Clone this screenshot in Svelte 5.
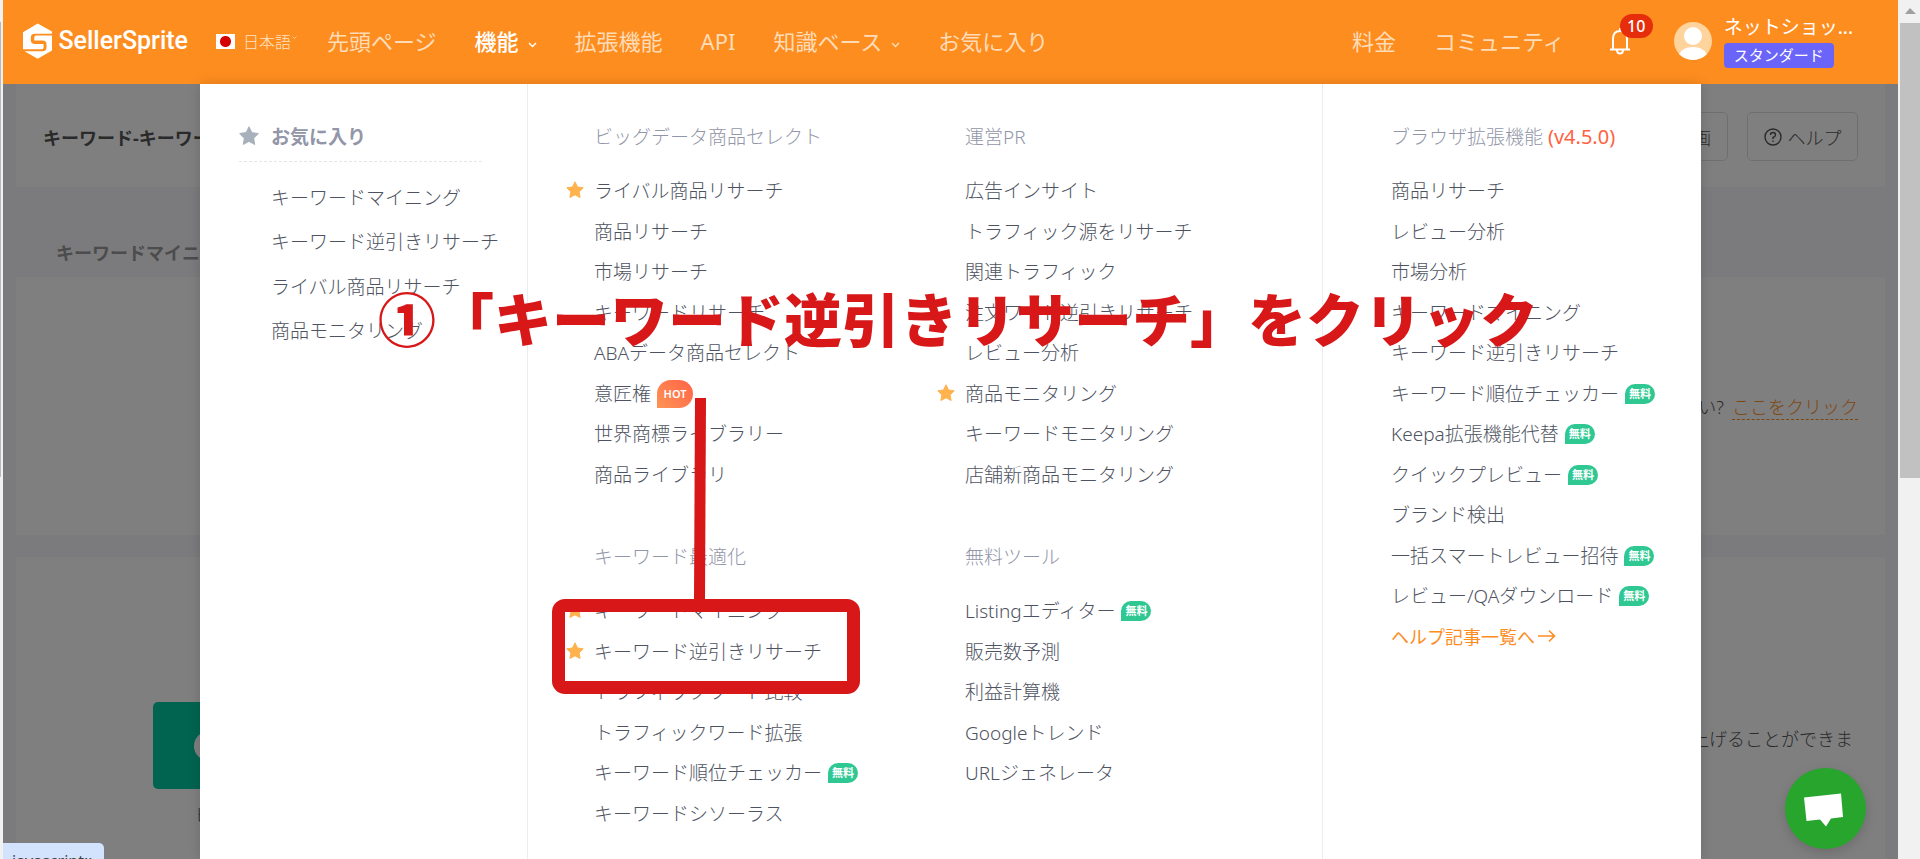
<script lang="ts">
	type Item = { label: string; star?: boolean; free?: boolean; hot?: boolean };
	type Group = { title: string; items: Item[] };

	const favorites = [
		'キーワードマイニング',
		'キーワード逆引きリサーチ',
		'ライバル商品リサーチ',
		'商品モニタリング'
	];

	const groups: Group[] = [
		{
			title: 'ビッグデータ商品セレクト',
			items: [
				{ label: 'ライバル商品リサーチ', star: true },
				{ label: '商品リサーチ' },
				{ label: '市場リサーチ' },
				{ label: 'キーワードリサーチ' },
				{ label: 'ABAデータ商品セレクト' },
				{ label: '意匠権', hot: true },
				{ label: '世界商標ライブラリー' },
				{ label: '商品ライブラリ' }
			]
		},
		{
			title: '運営PR',
			items: [
				{ label: '広告インサイト' },
				{ label: 'トラフィック源をリサーチ' },
				{ label: '関連トラフィック' },
				{ label: '注文ワード逆引きリサーチ' },
				{ label: 'レビュー分析' },
				{ label: '商品モニタリング', star: true },
				{ label: 'キーワードモニタリング' },
				{ label: '店舗新商品モニタリング' }
			]
		},
		{
			title: 'キーワード最適化',
			items: [
				{ label: 'キーワードマイニング', star: true },
				{ label: 'キーワード逆引きリサーチ', star: true },
				{ label: 'トラフィックワード比較' },
				{ label: 'トラフィックワード拡張' },
				{ label: 'キーワード順位チェッカー', free: true },
				{ label: 'キーワードシソーラス' }
			]
		},
		{
			title: '無料ツール',
			items: [
				{ label: 'Listingエディター', free: true },
				{ label: '販売数予測' },
				{ label: '利益計算機' },
				{ label: 'Googleトレンド' },
				{ label: 'URLジェネレータ' }
			]
		}
	];

	const extension: Item[] = [
		{ label: '商品リサーチ' },
		{ label: 'レビュー分析' },
		{ label: '市場分析' },
		{ label: 'キーワードマイニング' },
		{ label: 'キーワード逆引きリサーチ' },
		{ label: 'キーワード順位チェッカー', free: true },
		{ label: 'Keepa拡張機能代替', free: true },
		{ label: 'クイックプレビュー', free: true },
		{ label: 'ブランド検出' },
		{ label: '一括スマートレビュー招待', free: true },
		{ label: 'レビュー/QAダウンロード', free: true }
	];

	const nav = [
		{ label: '先頭ページ' },
		{ label: '機能', active: true, caret: true },
		{ label: '拡張機能' },
		{ label: 'API' },
		{ label: '知識ベース', caret: true },
		{ label: 'お気に入り' }
	];
</script>

{#snippet star()}
	<svg class="star" viewBox="0 0 18 18" aria-hidden="true">
		<path d="M9 .8l2.5 5.2 5.7.8-4.1 4 1 5.7L9 13.8l-5.100 2.700 1-5.700-4.100-4 5.700-.8z" fill="currentColor" stroke="currentColor" stroke-linejoin="round" />
	</svg>
{/snippet}

{#snippet caret()}
	<svg class="caret" viewBox="0 0 9 6" aria-hidden="true">
		<path d="M1 1l3.500 3.600L8 1" fill="none" stroke="currentColor" stroke-width="1.400" />
	</svg>
{/snippet}

{#snippet row(item: Item)}
	<li>
		<span class="slot">{#if item.star}{@render star()}{/if}</span>
		<a href="#top">{item.label}</a>
		{#if item.free}<span class="free">無料</span>{/if}
		{#if item.hot}<span class="hot">HOT</span>{/if}
	</li>
{/snippet}

<div class="window">
	<div class="edge"><div class="edge-bar"></div></div>

	<div class="page">
		<header>
			<a class="logo" href="#top">
				<svg viewBox="0 0 30 36" width="30" height="36" aria-hidden="true">
					<path d="M15 0L30 8.500v2H12q-4 0-4 4v2.500q0 4 4 4h9v4q0 1.500-1.500 1.500H0V9z" fill="#fff" />
					<path d="M30 12.500V27.500L15 36 1.500 28.500H20q4 0 4-4v-3q0-4-4-4h-8.500v-3q0-2 2-2z" fill="#fff" />
				</svg>
				SellerSprite
			</a>
			<button class="lang"><span class="flag"></span>日本語{@render caret()}</button>
			<nav>
				{#each nav as entry}
					<a href="#top" class:active={entry.active}>
						{entry.label}{#if entry.caret}{@render caret()}{/if}
					</a>
				{/each}
			</nav>
			<nav class="right">
				<a href="#top">料金</a>
				<a href="#top">コミュニティ</a>
			</nav>
			<button class="bell" aria-label="通知">
				<svg viewBox="0 0 22 28" width="22" height="28" fill="none" stroke="#fff" stroke-width="2" aria-hidden="true">
					<path d="M11 1v3M4 22V12q0-8 7-8t7 8v10M1 22.500h20M8 23q0 3.500 3 3.500t3-3.500" />
				</svg>
				<span class="count">10</span>
			</button>
			<svg class="avatar" viewBox="0 0 38 38" width="38" height="38" aria-hidden="true">
				<clipPath id="face"><circle cx="19" cy="19" r="19" /></clipPath>
				<g clip-path="url(#face)">
					<rect width="38" height="38" fill="#ffd49c" />
					<circle cx="19" cy="14" r="9" fill="#fff" />
					<ellipse cx="19" cy="36" rx="15" ry="11" fill="#fff" />
				</g>
			</svg>
			<div class="user">
				<span class="name">ネットショッ...</span>
				<span class="plan">スタンダード</span>
			</div>
		</header>

		<main>
			<section class="card title-card">
				<h1>キーワード-キーワードマイニング</h1>
				<button>動画</button>
				<button>
					<svg viewBox="0 0 18 18" width="18" height="18" fill="none" stroke="currentColor" stroke-width="1.400" aria-hidden="true">
						<circle cx="9" cy="9" r="8" />
						<path d="M6.500 7q0-2.500 2.500-2.500T11.500 7Q11.500 8.500 9 9.500v1.500M9 12.500v1.500" />
					</svg>
					ヘルプ
				</button>
			</section>
			<h2>キーワードマイニング</h2>
			<section class="card search-card">
				<span>い?</span><a href="#top">ここをクリック</a>
			</section>
			<section class="card guide-card">
				<figure>
					<div class="tile"><span></span></div>
					<figcaption>ビデオ</figcaption>
				</figure>
				<p>上げることができま</p>
			</section>
			<div class="dim"></div>
		</main>

		<div class="menu">
			<section class="favorites">
				<h3>{@render star()}お気に入り</h3>
				<ul>
					{#each favorites as label}
						<li><a href="#top">{label}</a></li>
					{/each}
				</ul>
			</section>
			<div class="groups">
				{#each groups as group}
					<section>
						<h4>{group.title}</h4>
						<ul>
							{#each group.items as item}{@render row(item)}{/each}
						</ul>
					</section>
				{/each}
			</div>
			<section class="extension">
				<h4>ブラウザ拡張機能 <em>(v4.5.0)</em></h4>
				<ul>
					{#each extension as item}{@render row(item)}{/each}
					<li class="more">
						<span class="slot"></span>
						<a href="#top">
							ヘルプ記事一覧へ
							<svg viewBox="0 0 18 14" width="18" height="14" fill="none" stroke="currentColor" stroke-width="1.600" aria-hidden="true">
								<path d="M0 7h16M11 1.500L16.500 7 11 12.500" />
							</svg>
						</a>
					</li>
				</ul>
			</section>
		</div>

		<button class="chat" aria-label="チャット">
			<svg viewBox="0 0 81 81" width="81" height="81" aria-hidden="true">
				<path d="M19 29.500L56 25.500 58 49 46 50.500 41 58.500 35 51.500 21.500 53z" fill="#fff" />
			</svg>
		</button>
		<div class="status">javascript:;</div>
	</div>

	<div class="scrollbar">
		<svg viewBox="0 0 20 23" width="20" height="23" aria-hidden="true"><path d="M5 14l5-6 6 6z" fill="#a0a0a0" /></svg>
		<div class="thumb"></div>
	</div>

	<p class="callout">①「キーワード逆引きリサーチ」をクリック</p>
	<svg class="pointer" viewBox="0 0 13 204" width="13" height="204" aria-hidden="true"><path d="M2 0h11l-1 204H1z" fill="#d71718" /></svg>
	<div class="frame"></div>
</div>

<style>
	:global(body) {
		margin: 0;
		overflow: hidden;
	}
	.window {
		position: relative;
		display: grid;
		grid-template-columns: 3px 1fr 22px;
		height: 100vh;
		overflow: hidden;
		background: #f1f1f1;
		font-family: 'Noto Sans', 'Noto Sans CJK JP', sans-serif;
		font-size: 19px;
		color: #4e5361;
	}
	a {
		color: inherit;
		text-decoration: none;
	}
	button {
		font: inherit;
		color: inherit;
		background: none;
		border: none;
		padding: 0;
		cursor: pointer;
	}
	h1, h2, h3, h4, p, ul, figure {
		margin: 0;
		padding: 0;
	}
	ul {
		list-style: none;
	}
	.edge {
		padding-top: 22px;
	}
	.edge-bar {
		width: 1px;
		height: 53vh;
		background: #b8b8b8;
	}
	.page {
		position: relative;
		display: flex;
		flex-direction: column;
		min-width: 0;
		height: 100vh;
		overflow: hidden;
	}

	header {
		display: flex;
		align-items: center;
		height: 84px;
		flex: none;
		box-sizing: border-box;
		padding: 0 45px 2px 20px;
		background: #fd8d1f;
		color: #fff;
		white-space: nowrap;
	}
	.logo {
		display: flex;
		align-items: center;
		gap: 6px;
		width: 165px;
		font: 500 25px/36px Roboto, sans-serif;
	}
	.lang {
		display: flex;
		align-items: center;
		margin: 0 30px 0 28px;
		font-size: 16px;
		font-weight: 300;
		color: #ffe3c6;
	}
	.lang .caret {
		width: 5px;
		margin: 0 0 6px 1px;
	}
	.flag {
		width: 19px;
		height: 15px;
		margin-right: 8px;
		background: radial-gradient(circle, #d40000 5px, #fff 6px);
	}
	nav {
		display: flex;
		gap: 38px;
		font-size: 22px;
		line-height: 32px;
		color: #ffdcb8;
	}
	nav .active {
		color: #fff;
		font-weight: 500;
	}
	.caret {
		width: 9px;
		margin-left: 9px;
	}
	nav .caret {
		margin-bottom: 2px;
	}
	.right {
		margin-left: auto;
	}
	.bell {
		position: relative;
		display: flex;
		margin: 0 43px 0 44px;
	}
	.count {
		position: absolute;
		left: 11px;
		top: -13px;
		width: 33px;
		border-radius: 12px;
		background: #e62e0d;
		font-size: 16px;
		line-height: 24px;
		font-weight: 500;
	}
	.user {
		display: flex;
		flex-direction: column;
		align-items: flex-start;
		gap: 4px;
		margin-left: 12px;
	}
	.name {
		font-size: 19px;
		line-height: 24px;
	}
	.plan {
		width: 110px;
		border-radius: 4px;
		background: #6a64f8;
		font-size: 15px;
		line-height: 25px;
		text-align: center;
	}

	main {
		position: relative;
		flex: 1;
		display: flex;
		flex-direction: column;
		min-height: 0;
		padding: 0 13px;
		background: #f6f6fa;
		color: #555;
		font-size: 18px;
		font-weight: 300;
	}
	.card {
		background: #fff;
		box-sizing: border-box;
	}
	.title-card {
		display: flex;
		align-items: center;
		gap: 19px;
		height: 103px;
		flex: none;
		padding: 2px 27px 0;
	}
	h1 {
		flex: 1;
		font-size: 18px;
		font-weight: 700;
	}
	.title-card button {
		display: flex;
		align-items: center;
		justify-content: center;
		gap: 6px;
		width: 111px;
		height: 49px;
		border: 1px solid #dcdfe6;
		border-radius: 5px;
	}
	.title-card button:nth-of-type(1) {
		width: 70px;
	}
	h2 {
		padding: 42px 40px 0;
		font-size: 18px;
		line-height: 48px;
		font-weight: 700;
		color: #999;
	}
	.search-card {
		display: flex;
		align-items: center;
		justify-content: flex-end;
		gap: 8px;
		height: 258px;
		flex: none;
		padding-right: 27px;
	}
	.search-card a {
		color: #fd8d1f;
		border-bottom: 1px dashed #fd8d1f;
	}
	.guide-card {
		flex: 1;
		display: flex;
		justify-content: space-between;
		align-items: flex-start;
		margin-top: 22px;
		padding: 145px 32px 0 137px;
	}
	.tile {
		display: flex;
		align-items: center;
		justify-content: center;
		width: 112px;
		height: 87px;
		border-radius: 5px;
		background: #00c8a0;
	}
	.tile span {
		width: 30px;
		height: 30px;
		border-radius: 50%;
		background: #fff;
	}
	figcaption {
		margin-top: 12px;
		padding-left: 42px;
	}
	.guide-card p {
		padding-top: 23px;
	}
	.dim {
		position: absolute;
		inset: 0;
		background: rgba(0, 0, 0, 0.5);
	}

	.menu {
		position: absolute;
		top: 84px;
		bottom: 0;
		left: 197px;
		right: 197px;
		display: grid;
		grid-template-columns: 328px 1fr 378px;
		background: #fff;
		box-shadow: 0 0 12px rgba(0, 0, 0, 0.15);
		font-weight: 300;
		white-space: nowrap;
	}
	.favorites, .groups {
		border-right: 1px solid #ececf0;
	}
	.favorites {
		padding: 31px 45px 0 39px;
	}
	.star {
		width: 18px;
		height: 18px;
		color: #ffb24d;
	}
	h3 {
		display: flex;
		align-items: center;
		gap: 12px;
		padding-bottom: 4px;
		height: 42px;
		border-bottom: 1px dashed #e4e6ea;
		font-size: 19px;
		font-weight: 700;
		color: #9296a8;
	}
	h3 .star {
		width: 20px;
		height: 20px;
		color: #a7b0bb;
	}
	.favorites ul {
		padding: 14px 0 0 32px;
	}
	.favorites li {
		line-height: 44px;
	}
	.favorites li:nth-child(even) {
		line-height: 45px;
	}
	.groups {
		display: grid;
		grid-template-columns: 371px 1fr;
		align-content: start;
		row-gap: 49px;
		padding: 39px 0 0 38px;
	}
	.extension {
		padding: 39px 0 0 40px;
	}
	h4 {
		padding-left: 28px;
		margin-bottom: 19px;
		font-size: 19px;
		line-height: 28px;
		font-weight: 300;
		color: #9296a8;
	}
	em {
		font-size: 20px;
		font-style: normal;
		font-weight: 400;
		color: #ff6242;
	}
	.menu li {
		display: flex;
		align-items: center;
	}
	.groups li, .extension li {
		height: 40px;
	}
	.groups li:nth-child(even), .extension li:nth-child(even) {
		height: 41px;
	}
	.slot {
		display: flex;
		width: 28px;
	}
	.free, .hot {
		margin-left: 6px;
		color: #fff;
		text-align: center;
	}
	.free {
		width: 30px;
		margin-top: 2px;
		border-radius: 10px 10px 10px 0;
		background: #2fc893;
		font-size: 11px;
		line-height: 20px;
		font-weight: 700;
	}
	.hot {
		width: 36px;
		margin-top: 2px;
		border-radius: 14px 14px 14px 0;
		background: linear-gradient(45deg, #ff9455, #ff6347);
		font-size: 11px;
		line-height: 28px;
		font-weight: 600;
	}
	.more {
		font-size: 18px;
		font-weight: 400;
		color: #fd8d1f;
	}
	.more a {
		display: flex;
		align-items: center;
		gap: 3px;
	}

	.chat {
		position: absolute;
		right: 32px;
		bottom: 10px;
		display: flex;
		border-radius: 50%;
		background: #28a52d;
		box-shadow: 0 4px 12px rgba(0, 0, 0, 0.15);
	}
	.status {
		position: absolute;
		left: 0;
		bottom: 0;
		width: 101px;
		height: 16px;
		box-sizing: border-box;
		padding: 7px 9px 0;
		overflow: hidden;
		border-radius: 0 5px 0 0;
		background: #d3e3fd;
		font-size: 16px;
		color: #3c4043;
	}
	.scrollbar {
		padding-left: 2px;
	}
	.scrollbar svg {
		display: block;
	}
	.thumb {
		height: 53vh;
		background: #c1c1c1;
	}

	/* tutorial annotations drawn over the page */
	.callout {
		position: absolute;
		top: 281px;
		left: 378px;
		font: 900 58px/72px 'Noto Sans CJK JP', sans-serif;
		color: #d71718;
		white-space: nowrap;
	}
	.pointer {
		position: absolute;
		top: 398px;
		left: 693px;
	}
	.frame {
		position: absolute;
		top: 599px;
		left: 552px;
		width: 282px;
		height: 69px;
		border: 13px solid #d71718;
		border-radius: 13px;
	}
</style>
